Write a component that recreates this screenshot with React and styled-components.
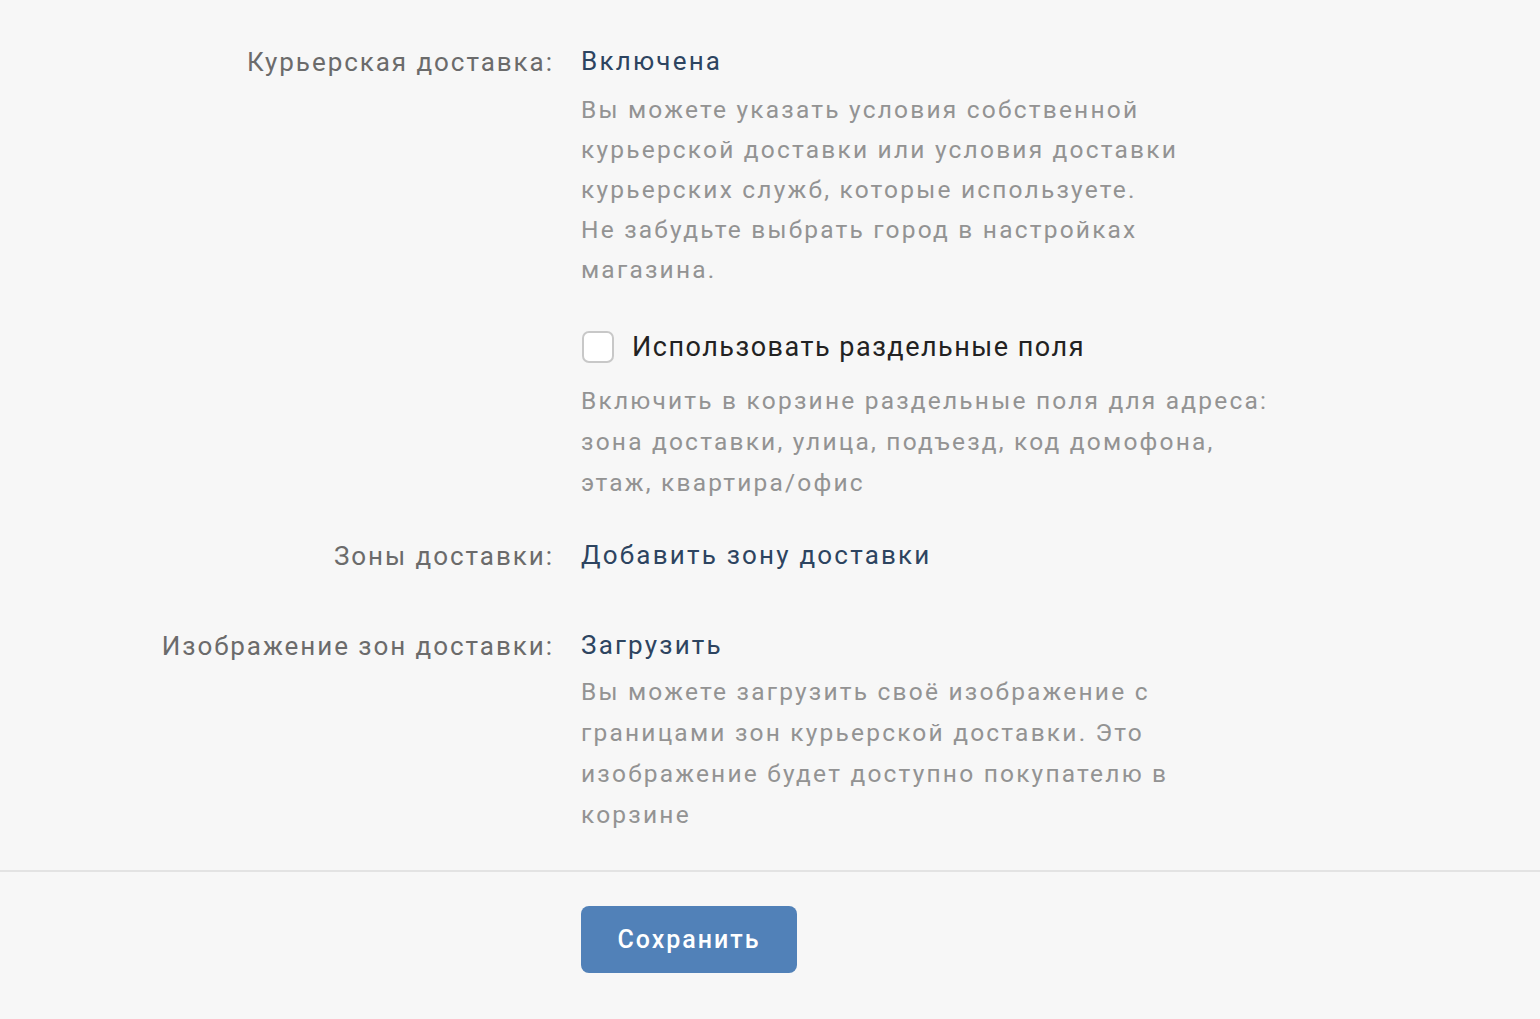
import React from 'react';
import styled, { createGlobalStyle } from 'styled-components';

const GlobalStyle = createGlobalStyle`
  html, body {
    margin: 0;
    padding: 0;
    background: #f7f7f7;
  }
  body {
    font-family: Roboto, "Liberation Sans", sans-serif;
    -webkit-font-smoothing: antialiased;
  }
`;

const App = () => (
  <Page>
    <GlobalStyle />
    <Form>
      <Row>
        <Label>Курьерская доставка:</Label>
        <Field>
          <Value>Включена</Value>
          <Hint>
            Вы можете указать условия собственной
            <br />
            курьерской доставки или условия доставки
            <br />
            курьерских служб, которые используете.
            <br />
            Не забудьте выбрать город в настройках
            <br />
            магазина.
          </Hint>
          <CheckRow>
            <Checkbox type="checkbox" />
            <CheckLabel>Использовать раздельные поля</CheckLabel>
          </CheckRow>
          <Hint $tight>
            Включить в корзине раздельные поля для адреса:
            <br />
            зона доставки, улица, подъезд, код домофона,
            <br />
            этаж, квартира/офис
          </Hint>
        </Field>
      </Row>

      <Row $gap={32}>
        <Label>Зоны доставки:</Label>
        <Field>
          <Value>Добавить зону доставки</Value>
        </Field>
      </Row>

      <Row $gap={49}>
        <Label>Изображение зон доставки:</Label>
        <Field>
          <Value>Загрузить</Value>
          <Hint $tight $top={6}>
            Вы можете загрузить своё изображение с
            <br />
            границами зон курьерской доставки. Это
            <br />
            изображение будет доступно покупателю в
            <br />
            корзине
          </Hint>
        </Field>
      </Row>
    </Form>

    <Footer>
      <Spacer />
      <SaveButton>Сохранить</SaveButton>
    </Footer>
  </Page>
);

export default App;

const Page = styled.div`
  display: flex;
  flex-direction: column;
  min-height: 1019px;
  background: #f7f7f7;
`;

const Form = styled.div`
  display: flex;
  flex-direction: column;
  padding: 41px 0 35px;
  border-bottom: 2px solid #e3e3e3;
`;

const Row = styled.div`
  display: grid;
  grid-template-columns: 552px 1fr;
  column-gap: 29px;
  margin-top: ${(p) => p.$gap || 0}px;
`;

const Label = styled.div`
  text-align: right;
  font-size: 26px;
  line-height: 40px;
  letter-spacing: 1.95px;
  margin-right: -1.95px;
  padding-top: 1px;
  color: #6b6b6b;
`;

const Field = styled.div`
  display: flex;
  flex-direction: column;
  align-items: flex-start;
`;

const Value = styled.a`
  font-size: 26px;
  line-height: 40px;
  letter-spacing: 2.2px;
  color: #2d4460;
  cursor: pointer;
`;

const Hint = styled.div`
  margin-top: ${(p) => (p.$top != null ? p.$top : p.$tight ? 13 : 9)}px;
  font-size: 24.5px;
  line-height: ${(p) => (p.$tight ? 41 : 40)}px;
  letter-spacing: 2.2px;
  color: #939393;
`;

const CheckRow = styled.label`
  display: flex;
  align-items: center;
  gap: 18px;
  height: 40px;
  margin-top: 37px;
  cursor: pointer;
`;

const Checkbox = styled.input`
  appearance: none;
  width: 32px;
  height: 32px;
  margin: 0 0 0 1px;
  border: 2px solid #c8c8c8;
  border-radius: 7px;
  background: #fff;
`;

const CheckLabel = styled.span`
  font-size: 27px;
  line-height: 40px;
  letter-spacing: 1.5px;
  color: #222;
`;

const Footer = styled.div`
  display: grid;
  grid-template-columns: 552px auto;
  column-gap: 29px;
  padding-top: 34px;
  justify-content: start;
`;

const Spacer = styled.div``;

const SaveButton = styled.button`
  width: 216px;
  height: 67px;
  border: none;
  border-radius: 8px;
  background: #5181b8;
  color: #fff;
  font-family: Roboto, "Liberation Sans", sans-serif;
  font-size: 25px;
  font-weight: 500;
  letter-spacing: 2px;
  cursor: pointer;
`;
